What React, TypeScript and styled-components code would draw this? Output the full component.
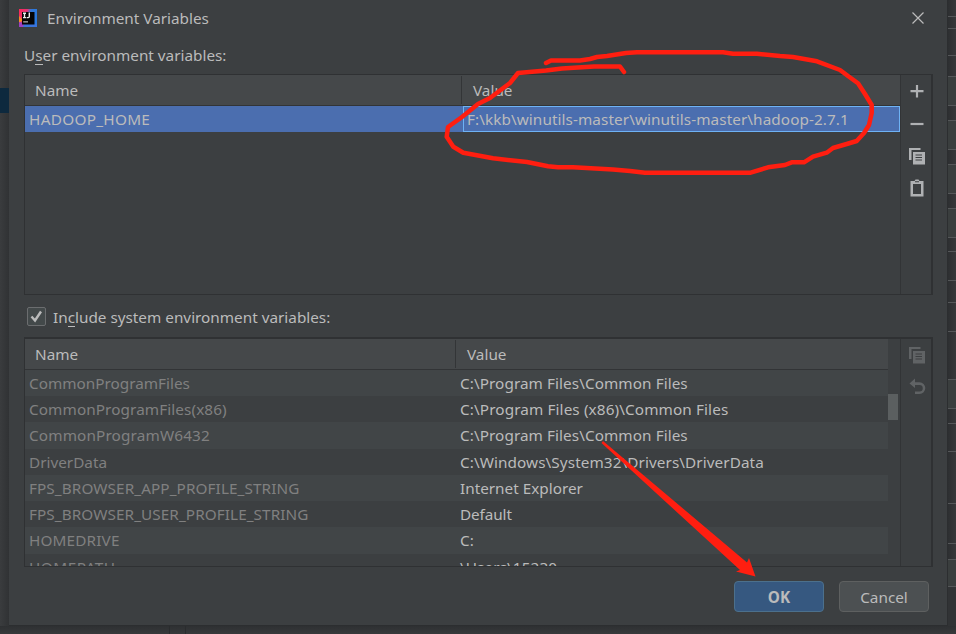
import React from "react";
import styled, { createGlobalStyle } from "styled-components";

const Global = createGlobalStyle`
  *{box-sizing:border-box} html,body{margin:0;padding:0;background:#35373a;overflow:hidden}
`;
const Desktop = styled.div`
  width:956px;height:634px;position:relative;overflow:hidden;display:grid;
  grid-template:626px 8px / 9px 939px 8px;background:#343638;
  font-family:"Noto Sans","Open Sans",sans-serif;font-size:15.3px;color:#bbbbbb;
`;
const LeftEdge = styled.div`
  background:linear-gradient(90deg,#3a3c3e,#303234);padding-top:88px;
`;
const LeftSelection = styled.div`height:25px;background:#0d293e;`;
const RightEdge = styled.div`background:#313335;overflow:hidden;`;
const EdgeBand = styled.div<{ $h: number; $alt?: boolean }>`
  height:${p => p.$h}px;border-bottom:1px solid #555759;
  background:${p => (p.$alt ? "#3a3e3e" : "linear-gradient(90deg,#2d2f31,#37383a)")};
`;
const BottomEdge = styled.div`
  grid-column:1 / 4;background:linear-gradient(#2e3032,#37393b);display:flex;padding-left:169px;
`;
const BottomTab = styled.div`width:17px;border:solid #2a2c2e;border-width:0 1px;`;
const Dialog = styled.main`
  background:#3c3f41;border:solid #2c2e30;border-width:0 1px 1px 0;display:flex;flex-direction:column;
  padding:0 14px 0 15px;
`;
const TitleBar = styled.header`height:36px;display:flex;align-items:center;margin-left:-5px;`;
const Title = styled.h1`font:inherit;margin:0 auto 0 10px;line-height:20px;`;
const CloseButton = styled.button`
  padding:0;border:0;background:none;width:14px;height:14px;display:flex;margin-right:8px;
`;
const Label = styled.div`height:38px;line-height:20px;padding-top:9px;`;
const Mnemonic = styled.span`box-shadow:inset 0 -1px #bbbbbb;display:inline-block;height:19px;line-height:19px;`;
const Txt = styled.span<{ $s?: number; $dim?: boolean }>`
  white-space:pre;letter-spacing:${p => p.$s ?? 0}px;color:${p => (p.$dim ? "#808080" : "inherit")};
`;
const Panel = styled.section<{ $h: number; $double?: boolean }>`
  height:${p => p.$h}px;flex:none;display:flex;border:1px solid #2f3133;
  border-top-width:${p => (p.$double ? 2 : 1)}px;border-right-width:2px;
`;
const Table = styled.div`flex:1;min-width:0;overflow:hidden;`;
const Head = styled.div<{ $first: number; $pad: number; $w?: number }>`
  height:31px;display:grid;grid-template-columns:${p => p.$first}px 1fr;background:#45484a;
  border-bottom:1px solid #323436;line-height:30px;width:${p => (p.$w ? p.$w + "px" : "auto")};
  & > :first-child{padding-left:10px;border-right:1px solid #333537;height:28px;margin-top:1px;line-height:28px}
  & > :last-child{padding-left:${p => p.$pad}px}
`;
const SelectedRow = styled.div`
  display:grid;grid-template-columns:438px 1fr;height:26px;background:#4b6eaf;line-height:26px;
`;
const NameCell = styled.div`padding-left:4px;`;
const EditorCell = styled.div`border:1px solid #6eb2f5;padding-left:3px;line-height:24px;`;
const Actions = styled.aside<{ $dim?: boolean }>`
  width:31px;flex:none;border-left:1px solid #323436;display:flex;flex-direction:column;
  align-items:center;padding:6px 0 0 2px;gap:12.3px;color:${p => (p.$dim ? "#606365" : "#afb1b3")};
  & svg{display:block;width:20px;height:20px;flex:none}
`;
const IncludeLine = styled.label`height:42px;display:flex;align-items:center;padding:2px 0 0 3px;gap:7px;`;
const Check = styled.span`
  width:19px;height:19px;border:1px solid #6b6d6f;border-radius:2px;background:#43494a;display:flex;margin-top:-2px;
`;
const Scroll = styled.div`height:196px;display:flex;`;
const Rows = styled.div`width:863px;flex:none;height:196px;overflow:hidden;`;
const Row = styled.div<{ $odd: boolean; $tall: boolean }>`
  display:grid;grid-template-columns:431px 1fr;height:${p => (p.$tall ? 27 : 26)}px;line-height:26px;
  background:${p => (p.$odd ? "#3c3f41" : "#414547")};
  & > *{padding-left:4px}
`;
const Track = styled.div`width:12px;padding-top:24px;`;
const Thumb = styled.div`width:10px;height:26px;background:#5b5f60;`;
const Footer = styled.footer`display:flex;justify-content:flex-end;gap:15px;padding:14px 4px 0 0;`;
const Button = styled.button<{ $primary?: boolean }>`
  width:90px;height:31px;padding:0;border-radius:4px;font:inherit;color:#bbbbbb;
  font-weight:${p => (p.$primary ? 700 : 400)};
  border:1px solid ${p => (p.$primary ? "#4c708c" : "#5e6060")};background:${p => (p.$primary ? "#365880" : "#4c5052")};
`;
const Ink = styled.svg`position:absolute;inset:0;pointer-events:none;`;

const Logo = () => (
  <svg width="18" height="18" viewBox="0 0 18 18">
    <defs><linearGradient id="logo" x1="0" y1="0" x2="1" y2=".35">
      <stop offset="0" stopColor="#fe2857" /><stop offset=".42" stopColor="#e53273" /><stop offset=".62" stopColor="#3179d8" /><stop offset="1" stopColor="#2878df" />
    </linearGradient></defs>
    <path fill="url(#logo)" d="M0 0h18v18H0z" /><path fill="#f58a25" d="M0 7l3 3v2l-3 2z" /><path fill="#9c40c1" d="M0 13l5 1v4H0z" /><path fill="#3974dc" d="M5 15h13v3H4z" />
    <path fill="#050505" d="M3 3h12.5v12.5H3z" />
    <path stroke="#eee" strokeWidth="1.4" fill="none" d="M4 4.2h3M5.5 4.2v4.6M4 8.6h3M10.3 3.5v4q0 1.1-1 1.1H7.6" /><path fill="#aaa" d="M4.2 12.2h4.8v1.3H4.2z" />
  </svg>
);
const Plus = () => <svg viewBox="0 0 20 20"><path stroke="currentColor" strokeWidth="2.2" d="M10 4v12.5M3.5 10.2h13" /></svg>;
const Minus = () => <svg viewBox="0 0 20 20"><path stroke="currentColor" strokeWidth="2.2" d="M3.5 11h13" /></svg>;
const Copy = () => <svg viewBox="0 0 20 20"><path fill="currentColor" d="M2 2H13.5v2H4.5v10H2z" /><path fill="currentColor" fillRule="evenodd" d="M6 6H18v12.5H6zM8.5 8.5v1h6.5v-1zm0 2.5v1h6.5v-1zm0 2.5v1h6.5v-1z" /></svg>;
const Paste = () => <svg viewBox="0 0 20 20"><path fill="currentColor" fillRule="evenodd" d="M3.5 3H7.5L8.5 1.5h3L12.5 3h4v15.5h-13zM6 6v10h8V6zM8 3.2v1h4v-1z" /></svg>;
const Undo = () => <svg viewBox="0 0 20 20"><path d="M8 1.5v9.5L2.5 6.5zM7 5.3h5.5a5.8 5.8 0 010 11.6H8v-2.5h4.5a3.2 3.2 0 000-6.5H7z" fill="currentColor" /></svg>;

const rows: [string, string, number, number][] = [
  ["CommonProgramFiles", "C:\\Program Files\\Common Files", 0, 0.07],
  ["CommonProgramFiles(x86)", "C:\\Program Files (x86)\\Common Files", 0.09, 0.11],
  ["CommonProgramW6432", "C:\\Program Files\\Common Files", 0.14, 0.07],
  ["DriverData", "C:\\Windows\\System32\\Drivers\\DriverData", 0, 0.08],
  ["FPS_BROWSER_APP_PROFILE_STRING", "Internet Explorer", 0.09, 0],
  ["FPS_BROWSER_USER_PROFILE_STRING", "Default", 0.08, -0.1],
  ["HOMEDRIVE", "C:", 0.15, 0],
  ["HOMEPATH", "\\Users\\15230", 0.5, 0.1],
];
const bands = [17, 12, 27, 21, 29, 15, 29, 15, 29, 15, 29, 14, 29, 22, 29, 48, 29, 15, 28, 52, 40, 16, 27];
const lightBands = [4, 6, 8, 10, 16, 22];

export default function App() {
  return (
    <><Global /><Desktop>
      <LeftEdge><LeftSelection /></LeftEdge>
      <Dialog>
        <TitleBar><Logo /><Title><Txt>Environment Variables</Txt></Title>
          <CloseButton aria-label="Close"><svg width="14" height="14"><path d="M1.5 1.5l11 11m0-11l-11 11" stroke="#bbb" strokeWidth="1.2" /></svg></CloseButton>
        </TitleBar>
        <Label><Txt>U<Mnemonic>s</Mnemonic>er environment variables:</Txt></Label>
        <Panel $h={221}>
          <Table>
            <Head $first={437} $pad={11}><div><Txt>Name</Txt></div><div><Txt>Value</Txt></div></Head>
            <SelectedRow><NameCell><Txt $s={0.3}>HADOOP_HOME</Txt></NameCell><EditorCell><Txt $s={0.08}>F:\kkb\winutils-master\winutils-master\hadoop-2.7.1</Txt></EditorCell></SelectedRow>
          </Table>
          <Actions><Plus /><Minus /><Copy /><Paste /></Actions>
        </Panel>
        <IncludeLine><Check><svg width="17" height="17"><path d="M3.5 8.5l3.5 4L13 3.5" fill="none" stroke="#bbb" strokeWidth="2.4" /></svg></Check><Txt>In<Mnemonic>c</Mnemonic>lude system environment variables:</Txt></IncludeLine>
        <Panel $h={230} $double>
          <Table>
            <Head $first={431} $pad={11} $w={863}><div><Txt>Name</Txt></div><div><Txt>Value</Txt></div></Head>
            <Scroll><Rows>{rows.map(([n, v, a, b], i) => <Row key={n} $odd={i % 2 === 1} $tall={i === 2 || i === 6}><div><Txt $dim $s={a}>{n}</Txt></div><div><Txt $s={b}>{v}</Txt></div></Row>)}</Rows><Track><Thumb /></Track></Scroll>
          </Table>
          <Actions $dim><Copy /><Undo /></Actions>
        </Panel>
        <Footer><Button $primary>OK</Button><Button>Cancel</Button></Footer>
      </Dialog>
      <RightEdge>{bands.map((h, i) => <EdgeBand key={i} $h={h} $alt={lightBands.includes(i)} />)}</RightEdge>
      <BottomEdge><BottomTab /></BottomEdge>
      <Ink width="956" height="634">
        <path d="M546 63L551 60.5H580L590 59L597 57L607 56L626 53L637 52.3H723L733 53.7H757L780 56L793 57L817 61.3L840 70L848 76L858 83.3L865 94L871.7 105V113L869 125L864 133L856.7 141L846.7 144L833 148L826.7 152.7L813 156.7L804 162.3H791.7L785 165L768 167.3L750.7 172.7H645L630 171L613 169.5L573 167.3H558L548 166.3L527 162L493 158.3L463.3 152.7L453.3 146.7L446.7 136.7L448 127L462 117L478 104L490 98L510 83L518 73L546 70.5L562 68.5L594 66.5H620L624 72" fill="none" stroke="#ff1e10" strokeWidth="4.5" strokeLinecap="round" strokeLinejoin="round" />
        <path d="M601.5 443L603 441L747 562.5L749 558L755.5 576.5L736 571.5L740 570z" fill="#ff1e10" />
      </Ink>
    </Desktop></>
  );
}
